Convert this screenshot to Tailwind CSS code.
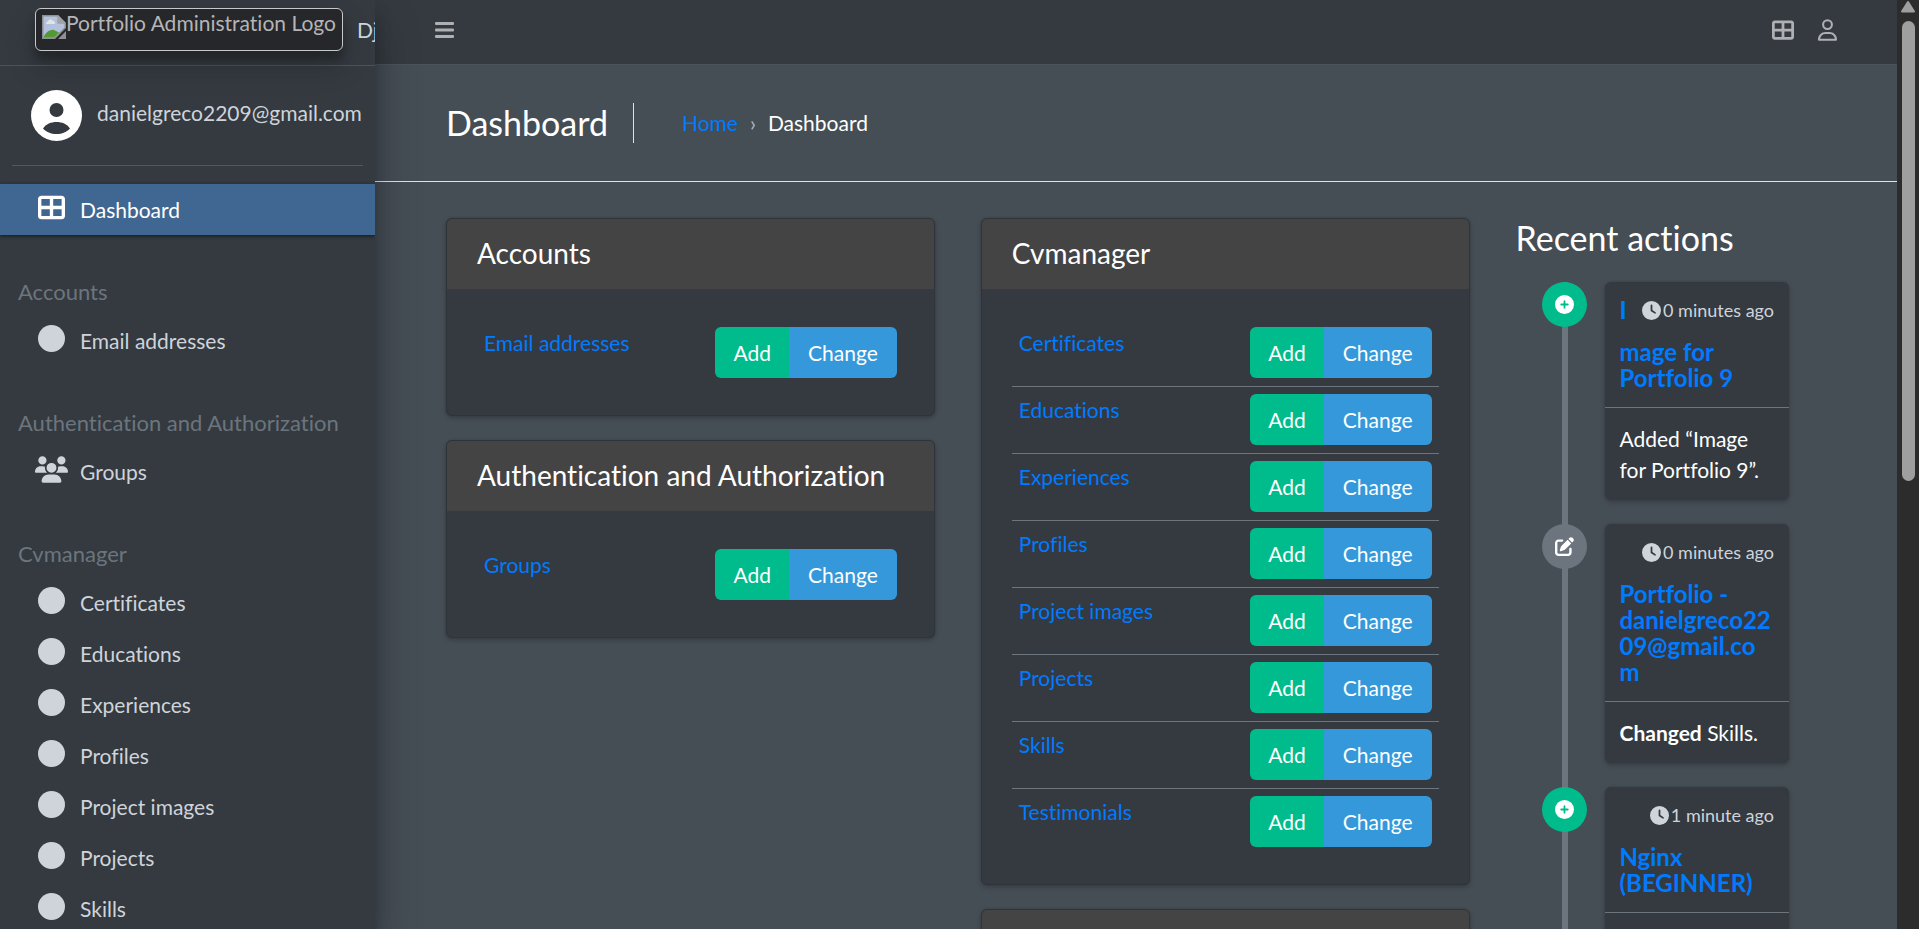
<!DOCTYPE html>
<html lang="en" class="dark">
<head>
    <meta charset="UTF-8">
    <meta name="viewport" content="width=device-width, initial-scale=1.0">
    <title>Dashboard | Portfolio Administration</title>
    <script src="https://cdn.jsdelivr.net/npm/@tailwindcss/browser@4"></script>
</head>
<body class="flex h-screen overflow-hidden bg-[#454d55] font-['Lato',sans-serif] text-[21px] leading-[31px] text-white [font-variant-ligatures:no-common-ligatures]">

    <!-- Icons -->
    <svg class="hidden">
        <symbol id="i-table" viewBox="0 0 512 512"><path d="M448 96l0 128-160 0 0-128 160 0zm0 192l0 128-160 0 0-128 160 0zM224 224L64 224 64 96l160 0 0 128zM64 288l160 0 0 128L64 416l0-128zM64 32C28.7 32 0 60.7 0 96L0 416c0 35.3 28.7 64 64 64l384 0c35.3 0 64-28.7 64-64l0-320c0-35.3-28.7-64-64-64L64 32z"/></symbol>
        <symbol id="i-user" viewBox="0 0 448 512"><path d="M304 128a80 80 0 1 0 -160 0 80 80 0 1 0 160 0zM96 128a128 128 0 1 1 256 0A128 128 0 1 1 96 128zM49.3 464l349.5 0c-8.9-63.3-63.3-112-129-112l-91.4 0c-65.7 0-120.1 48.7-129 112zM0 482.3C0 383.8 79.8 304 178.3 304l91.4 0C368.2 304 448 383.8 448 482.3c0 16.4-13.3 29.7-29.7 29.7L29.7 512C13.3 512 0 498.7 0 482.3z"/></symbol>
        <symbol id="i-users" viewBox="0 0 640 512"><path d="M144 0a80 80 0 1 1 0 160A80 80 0 1 1 144 0zM512 0a80 80 0 1 1 0 160A80 80 0 1 1 512 0zM0 298.7C0 239.8 47.8 192 106.7 192l42.7 0c15.9 0 31 3.5 44.6 9.7c-1.3 7.2-1.9 14.7-1.9 22.3c0 38.2 16.8 72.5 43.3 96c-.2 0-.4 0-.7 0L21.3 320C9.6 320 0 310.4 0 298.7zM405.3 320c-.2 0-.4 0-.7 0c26.6-23.5 43.3-57.8 43.3-96c0-7.6-.7-15-1.9-22.3c13.6-6.3 28.7-9.7 44.6-9.7l42.7 0C592.2 192 640 239.8 640 298.7c0 11.8-9.6 21.3-21.3 21.3l-213.3 0zM224 224a96 96 0 1 1 192 0 96 96 0 1 1 -192 0zM128 485.3C128 411.7 187.7 352 261.3 352l117.3 0C452.3 352 512 411.7 512 485.3c0 14.7-11.9 26.7-26.7 26.7l-330.7 0c-14.7 0-26.7-11.9-26.7-26.7z"/></symbol>
        <symbol id="i-circle" viewBox="0 0 512 512"><circle cx="256" cy="256" r="256"/></symbol>
        <symbol id="i-clock" viewBox="0 0 512 512"><path d="M256 0a256 256 0 1 1 0 512A256 256 0 1 1 256 0zM232 120l0 136c0 8 4 15.5 10.7 20l96 64c11 7.4 25.9 4.4 33.3-6.7s4.4-25.9-6.7-33.3L280 243.2 280 120c0-13.3-10.7-24-24-24s-24 10.7-24 24z"/></symbol>
        <symbol id="i-plus" viewBox="0 0 512 512"><path d="M256 512A256 256 0 1 0 256 0a256 256 0 1 0 0 512zM232 344l0-64-64 0c-13.3 0-24-10.7-24-24s10.7-24 24-24l64 0 0-64c0-13.3 10.7-24 24-24s24 10.7 24 24l0 64 64 0c13.3 0 24 10.7 24 24s-10.7 24-24 24l-64 0 0 64c0 13.3-10.7 24-24 24s-24-10.7-24-24z"/></symbol>
        <symbol id="i-edit" viewBox="0 0 512 512"><path d="M471.6 21.7c-21.9-21.9-57.3-21.9-79.2 0L362.3 51.7l97.9 97.9 30.1-30.1c21.9-21.9 21.9-57.3 0-79.2L471.6 21.7zm-299.2 220c-6.1 6.1-10.8 13.6-13.5 21.9l-29.6 88.8c-2.9 8.6-.6 18.1 5.8 24.6s15.9 8.7 24.6 5.8l88.8-29.6c8.2-2.7 15.7-7.4 21.9-13.5L437.7 172.3 339.7 74.3 172.4 241.7zM96 64C43 64 0 107 0 160L0 416c0 53 43 96 96 96l256 0c53 0 96-43 96-96l0-96c0-17.7-14.3-32-32-32s-32 14.3-32 32l0 96c0 17.7-14.3 32-32 32L96 448c-17.7 0-32-14.3-32-32l0-256c0-17.7 14.3-32 32-32l96 0c17.7 0 32-14.3 32-32s-14.3-32-32-32L96 64z"/></symbol>
    </svg>

    <!-- Sidebar -->
    <aside class="z-10 w-[375px] shrink-0 overflow-hidden bg-[#343a40] text-[#ced4da] shadow-[0_21px_42px_rgba(0,0,0,0.25),0_15px_15px_rgba(0,0,0,0.22)]">
        <a href="#" class="flex h-[66px] items-start gap-3.5 border-b border-[#4b545c] pt-2 pl-[35px] whitespace-nowrap">
            <span class="flex h-[43px] shrink-0 items-start rounded-md border border-[#c6c8ca] bg-[#25272a] px-1.5 leading-7 text-[#b4b5b6] shadow-[0_15px_30px_rgba(0,0,0,0.19),0_9px_9px_rgba(0,0,0,0.23)]">
                <svg class="mt-1.5 size-6" viewBox="0 0 24 24">
                    <path d="M0 0h16l8 8v5L13 24H0z" fill="#8d8f91"/>
                    <path d="M1.500 1.500h14v7h7v4L12 22.500H1.500z" fill="#b4c1dc"/>
                    <path d="M4 9c0-2 1.500-2 2-3 1-2 4-2 5 0 2 0 2 1 2 3z" fill="#dfe4e4"/>
                    <path d="M1.500 22.500C3 18 8 14 12 15l5 2.500-5 5z" fill="#529a36"/>
                    <path d="M16 0l8 8h-8z" fill="#a1a2a3"/>
                    <path d="M24 16v8h-8z" fill="#8d8f91"/>
                </svg>
                <span>Portfolio Administration Logo</span>
            </span>
            <span class="pt-1.5">Dj</span>
        </a>

        <div class="mx-3 mb-[18px] flex h-[100px] items-center border-b border-[#4f5962] pl-[19px]">
            <svg class="size-[51px] shrink-0" viewBox="0 0 51 51">
                <circle cx="25.500" cy="25.500" r="25.500" fill="#fff"/>
                <circle cx="25.500" cy="20" r="7" fill="#343a40"/>
                <path d="M12 38.500C15 34 20 32 25.500 32S36 34 39 38.500C36 42 31 44 25.500 44S15 42 12 38.500z" fill="#343a40"/>
            </svg>
            <a href="#" class="pb-1.5 pl-[15px]">danielgreco2209@gmail.com</a>
        </div>

        <nav id="sidebar-nav">
            <a href="#" class="flex h-[51px] items-center bg-[#3f6791] pl-[33px] text-white shadow-[0_1px_4px_rgba(0,0,0,0.24),0_1px_3px_rgba(0,0,0,0.4)]">
                <span class="flex w-[37px] justify-center pb-1"><svg class="size-[27px] fill-current"><use href="#i-table"/></svg></span>
                <span class="pl-2.5">Dashboard</span>
            </a>
        </nav>
    </aside>

    <!-- Content -->
    <div class="flex min-w-0 flex-1 flex-col overflow-hidden">
        <header class="flex h-[65px] shrink-0 items-center justify-between border-b border-[#4b545c] bg-[#343a40] px-[60px] pb-1 text-[#aeb0b3]">
            <button type="button" aria-label="Toggle sidebar"><svg class="h-4 w-[19px] fill-current" viewBox="0 0 19 16"><rect width="19" height="3" rx="1"/><rect y="6.500" width="19" height="3" rx="1"/><rect y="13" width="19" height="3" rx="1"/></svg></button>
            <div class="flex items-center gap-6">
                <a href="#" aria-label="Recent"><svg class="size-[22px] fill-current"><use href="#i-table"/></svg></a>
                <a href="#" aria-label="Account"><svg class="h-[22px] w-[19px] fill-current"><use href="#i-user"/></svg></a>
            </div>
        </header>

        <section class="flex h-[117px] shrink-0 items-center border-b border-[#dee2e6] pl-[71px]">
            <h1 class="border-r border-[#dee2e6] pr-[25px] text-[34px] leading-10">Dashboard</h1>
            <ol class="flex pb-0.5 pl-12">
                <li><a href="#" class="text-[#007bff]">Home</a></li>
                <li class="px-3 text-[#adb5bd]">›</li>
                <li>Dashboard</li>
            </ol>
        </section>

        <main class="grid grid-cols-[3fr_3fr_2fr] items-start px-12 pt-9">
            <div id="col-left" class="flex flex-col gap-6 px-[23px]"></div>
            <div id="col-right" class="flex flex-col gap-6 px-[23px]"></div>

            <div class="px-[23px]">
                <h2 class="mb-6 text-[34px] leading-10">Recent actions</h2>
                <ul id="timeline" class="relative pr-[37px] pl-[26px] before:absolute before:inset-y-0 before:left-[46px] before:w-1.5 before:bg-[#6c757d]"></ul>
            </div>
        </main>
    </div>

    <!-- Scrollbar -->
    <div class="flex w-[22px] shrink-0 flex-col items-center bg-[#2c2c2c] pt-px">
        <svg class="mb-2 h-3 w-3.5" viewBox="0 0 14 12"><path d="M6 .7a1.300 1.300 0 0 1 2 0l5.700 9c.6 1 .1 1.800-1 1.800H1.300c-1.100 0-1.600-.8-1-1.800z" fill="#9f9f9f"/></svg>
        <div class="h-[460px] w-[13px] rounded-full bg-[#9f9f9f]"></div>
    </div>

<script>
const apps = [
    { name: 'Accounts', icon: 'i-circle', models: ['Email addresses'], column: 'col-left' },
    { name: 'Authentication and Authorization', icon: 'i-users', models: ['Groups'], column: 'col-left' },
    { name: 'Cvmanager', icon: 'i-circle', models: ['Certificates', 'Educations', 'Experiences', 'Profiles', 'Project images', 'Projects', 'Skills', 'Testimonials'], column: 'col-right' }
];

const actions = [
    { icon: 'i-plus', time: '0 minutes ago', title: 'Image for Portfolio 9', body: 'Added “Image for Portfolio 9”.' },
    { icon: 'i-edit', time: '0 minutes ago', title: 'Portfolio - danielgreco2209@gmail.com', body: '<b>Changed</b> Skills.' },
    { icon: 'i-plus', time: '1 minute ago', title: 'Nginx (BEGINNER)', body: '' }
];

// Sidebar menu
const nav = document.getElementById('sidebar-nav');
apps.forEach(app => {
    nav.insertAdjacentHTML('beforeend', `<h2 class="pt-[41px] pb-2 pl-[18px] text-[22px] text-[#6c757d]">${app.name}</h2>`);
    app.models.forEach(model => {
        nav.insertAdjacentHTML('beforeend', `
            <a href="#" class="flex h-[51px] items-center pl-[33px]">
                <span class="flex w-[37px] justify-center pb-1"><svg class="${app.icon === 'i-users' ? 'h-[27px] w-[33px]' : 'size-[27px]'} fill-current"><use href="#${app.icon}"/></svg></span>
                <span class="pl-2.5">${model}</span>
            </a>`);
    });
});

// App cards
const cardClass = 'overflow-hidden rounded-md border border-[#2f3439] bg-[#343a40] shadow-[0_0_2px_rgba(0,0,0,0.125),0_2px_5px_rgba(0,0,0,0.2)]';
const titleClass = 'bg-[#444] px-[30px] pt-[17px] pb-[19px] text-[28px] leading-[34px]';
apps.forEach(app => {
    const rows = app.models.map((model, i) => `
        <tr>
            <td class="border-t ${i ? 'border-[#6c757d]' : 'border-transparent'} pt-[7px] pb-2 pl-[7px] align-top"><a href="#" class="text-[#007bff]">${model}</a></td>
            <td class="border-t ${i ? 'border-[#6c757d]' : 'border-transparent'} pt-[7px] pr-[7px] pb-2">
                <div class="flex justify-end">
                    <a href="#" class="flex h-[51px] items-center rounded-l-md bg-[#00bc8c] px-[18px]">Add</a>
                    <a href="#" class="flex h-[51px] items-center rounded-r-md bg-[#3498db] px-[19px]">Change</a>
                </div>
            </td>
        </tr>`).join('');
    document.getElementById(app.column).insertAdjacentHTML('beforeend', `
        <div class="${cardClass}">
            <h3 class="${titleClass}">${app.name}</h3>
            <div class="px-[30px] pt-[30px] pb-[29px]"><table class="w-full border-separate border-spacing-0"><tbody>${rows}</tbody></table></div>
        </div>`);
});
document.getElementById('col-right').insertAdjacentHTML('beforeend', `<div class="${cardClass}"><h3 class="${titleClass}">&nbsp;</h3></div>`);

// Timeline
const timeline = document.getElementById('timeline');
actions.forEach(action => {
    timeline.insertAdjacentHTML('beforeend', `
        <li class="relative mb-6 flex items-start gap-[18px]">
            <span class="flex size-[45px] shrink-0 items-center justify-center rounded-full ${action.icon === 'i-edit' ? 'bg-[#6c757d]' : 'bg-[#00bc8c]'}"><svg class="size-[19px] fill-current"><use href="#${action.icon}"/></svg></span>
            <div class="min-w-0 flex-1 rounded-md bg-[#343a40] shadow-[0_0_2px_rgba(0,0,0,0.125),0_2px_5px_rgba(0,0,0,0.2)]">
                <span class="float-right flex items-center gap-0.5 pt-3.5 pr-[15px] pb-[15px] pl-[13px] text-lg leading-7 text-[#ced4da]"><svg class="size-[19px] fill-current"><use href="#i-clock"/></svg>${action.time}</span>
                <h3 class="border-b border-[#6c757d] px-[15px] pt-[15px] pb-4 text-2xl leading-[26px] font-bold [word-break:break-word]"><a href="#" class="text-[#007bff]">${action.title}</a></h3>
                <div class="min-h-[61px] p-[15px]">${action.body}</div>
            </div>
        </li>`);
});
</script>

</body>
</html>
